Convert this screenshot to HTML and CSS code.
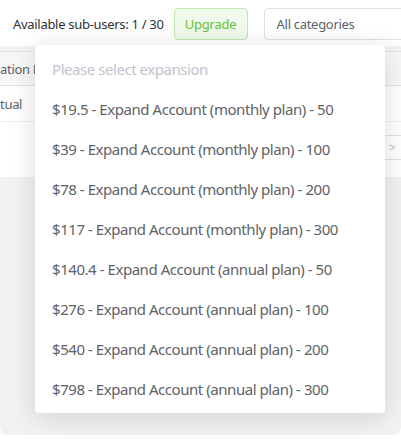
FILE: index.html
```html
<!DOCTYPE html>
<html>
<head>
<meta charset="utf-8">
<link rel="stylesheet" href="styles.css">
</head>
<body>
<div class="page">
  <div class="topbar">
    <span class="count">Available sub-users: 1 / 30</span>
    <button class="upgrade">Upgrade</button>
    <div class="select">All categories</div>
  </div>
  <div class="panel">
    <div class="card">
      <div class="row head"><span class="cell">ation D</span></div>
      <div class="row"><span class="cell">tual</span></div>
      <div class="pager"><span class="next">&gt;</span></div>
    </div>
  </div>
  <ul class="dropdown">
    <li class="placeholder">Please select expansion</li>
    <li>$19.5 - Expand Account (monthly plan) - 50</li>
    <li>$39 - Expand Account (monthly plan) - 100</li>
    <li>$78 - Expand Account (monthly plan) - 200</li>
    <li>$117 - Expand Account (monthly plan) - 300</li>
    <li>$140.4 - Expand Account (annual plan) - 50</li>
    <li>$276 - Expand Account (annual plan) - 100</li>
    <li>$540 - Expand Account (annual plan) - 200</li>
    <li>$798 - Expand Account (annual plan) - 300</li>
  </ul>
</div>
</body>
</html>
```

FILE: styles.css
```css
* { box-sizing: border-box; }
html, body { margin: 0; padding: 0; background: #fff; }
body { font-family: "Noto Sans", "Open Sans", sans-serif; color: #606266; letter-spacing: -0.3px; }
.page { position: relative; width: 401px; height: 439px; overflow: hidden; }
.topbar { height: 46px; display: flex; align-items: center; padding: 1px 0 0 13px; background: #fff; }
.count { font-size: 13px; color: #303133; white-space: nowrap; }
.upgrade {
  margin-left: 10px; width: 74px; height: 32px; background: #f0f9eb; border: 1px solid #c2e7b0;
  color: #67c23a; border-radius: 4px; font: inherit; font-size: 13px; padding: 0; flex: none; letter-spacing: -0.2px;
}
.select {
  margin-left: 16px; height: 32px; flex: none; width: 200px; border: 1px solid #dcdfe6; border-radius: 4px;
  display: flex; align-items: center; padding-left: 12px; font-size: 13px; color: #606266; white-space: nowrap;
}
.panel { height: 389px; background: #f2f2f2; border-radius: 0 0 8px 8px; padding-top: 5px; }
.card { background: #fff; height: 126px; }
.row { height: 36px; border-bottom: 1px solid #ebeef5; display: flex; align-items: center; font-size: 13px; color: #606266; white-space: nowrap; overflow: hidden; }
.row.head { height: 35px; background: #f7f7f7; border-top: 1px solid #e4e4e4; border-bottom: 1px solid #e4e4e4; }
.cell { white-space: nowrap; flex: none; }
.pager { display: flex; justify-content: flex-end; padding-top: 13px; }
.next {
  width: 24px; height: 25px; margin-right: -6px; border: 1px solid #dcdfe6; border-radius: 3px;
  display: flex; align-items: center; padding-left: 5px; color: #c0c4cc; font-size: 12px;
}
.dropdown {
  position: absolute; left: 35px; top: 45px; width: 350px; margin: 0; padding: 4px 0; list-style: none;
  background: #fff; border-radius: 4px; box-shadow: 0 4px 28px rgba(0, 0, 0, 0.14);
}
.dropdown li { height: 40px; line-height: 40px; padding-left: 17px; font-size: 15px; color: #606266; white-space: nowrap; letter-spacing: -0.45px; }
.dropdown li.placeholder { color: #c0c4cc; }
```
